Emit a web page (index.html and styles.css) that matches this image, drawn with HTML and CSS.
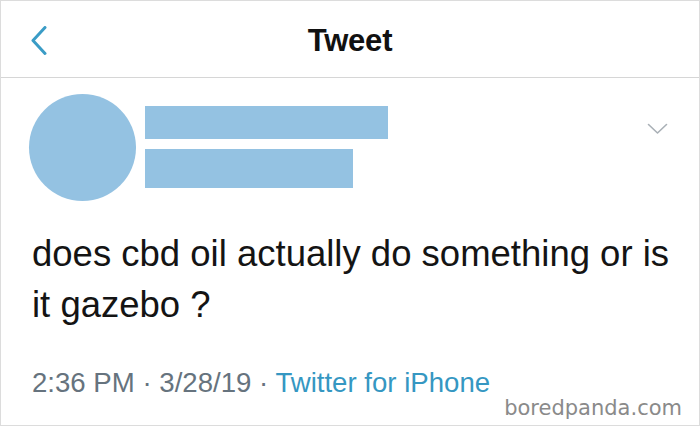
FILE: index.html
```html
<!DOCTYPE html>
<html>
<head>
<meta charset="utf-8">
<link rel="stylesheet" href="styles.css">
</head>
<body>
<div class="frame">
  <header class="topbar">
    <div class="back">
      <svg width="18" height="30" viewBox="0 0 18 30"><polyline points="15,1.5 3,14.5 15,27.5" fill="none" stroke="#3a9cc6" stroke-width="3" stroke-linecap="round" stroke-linejoin="round"/></svg>
    </div>
    <h1 class="title">Tweet</h1>
    <div class="spacer"></div>
  </header>
  <section class="tweet">
    <div class="author">
      <div class="avatar"></div>
      <div class="names">
        <div class="bar bar1"></div>
        <div class="bar bar2"></div>
      </div>
      <svg class="caret" width="21" height="12" viewBox="0 0 21 12"><polyline points="1.5,1.5 10.5,10 19.5,1.5" fill="none" stroke="#a9b0b6" stroke-width="1.6" stroke-linecap="round" stroke-linejoin="round"/></svg>
    </div>
    <p class="text">does cbd oil actually do something or is it gazebo ?</p>
    <div class="meta"><span>2:36 PM · 3/28/19 · </span><span class="source">Twitter for iPhone</span></div>
  </section>
  <div class="watermark">boredpanda.com</div>
</div>
</body>
</html>
```
FILE: styles.css
```css
html, body {
  margin: 0;
  padding: 0;
  background: #ffffff;
}
.frame {
  position: relative;
  width: 700px;
  height: 426px;
  box-sizing: border-box;
  border: 1px solid #dcdcdc;
  overflow: hidden;
  font-family: "Liberation Sans", Arial, sans-serif;
}
.topbar {
  height: 77px;
  border-bottom: 1px solid #d6d6d6;
  display: grid;
  grid-template-columns: 1fr auto 1fr;
  align-items: center;
  padding-top: 3px;
  box-sizing: border-box;
}
.back {
  padding-left: 29px;
  display: flex;
  align-items: center;
}
.back svg { display: block; }
.title {
  margin: 0;
  font-size: 31px;
  font-weight: 700;
  color: #111111;
  letter-spacing: -0.2px;
}
.tweet {
  padding: 16px 28px 0 28px;
}
.author {
  display: flex;
  align-items: flex-start;
}
.avatar {
  width: 107px;
  height: 107px;
  border-radius: 50%;
  background: #94c2e2;
  flex: none;
}
.names {
  margin-left: 9px;
  padding-top: 12px;
  display: flex;
  flex-direction: column;
  gap: 10px;
}
.bar {
  background: #94c2e2;
}
.bar1 { width: 243px; height: 33px; }
.bar2 { width: 208px; height: 39px; }
.caret {
  margin-left: auto;
  margin-top: 29px;
  margin-right: 3px;
  display: block;
}
.text {
  margin: 27px 0 0 3px;
  font-size: 36.5px;
  line-height: 51px;
  color: #141414;
  width: 650px;
}
.meta {
  margin: 37px 0 0 3px;
  font-size: 27.6px;
  color: #66737e;
  white-space: nowrap;
}
.source {
  color: #3597c2;
}
.watermark {
  position: absolute;
  right: 15px;
  bottom: 5px;
  font-family: "DejaVu Sans", Verdana, sans-serif;
  font-size: 21px;
  color: #8a8a8a;
  background: rgba(255,255,255,0.85);
  padding: 0 2px;
}
```
